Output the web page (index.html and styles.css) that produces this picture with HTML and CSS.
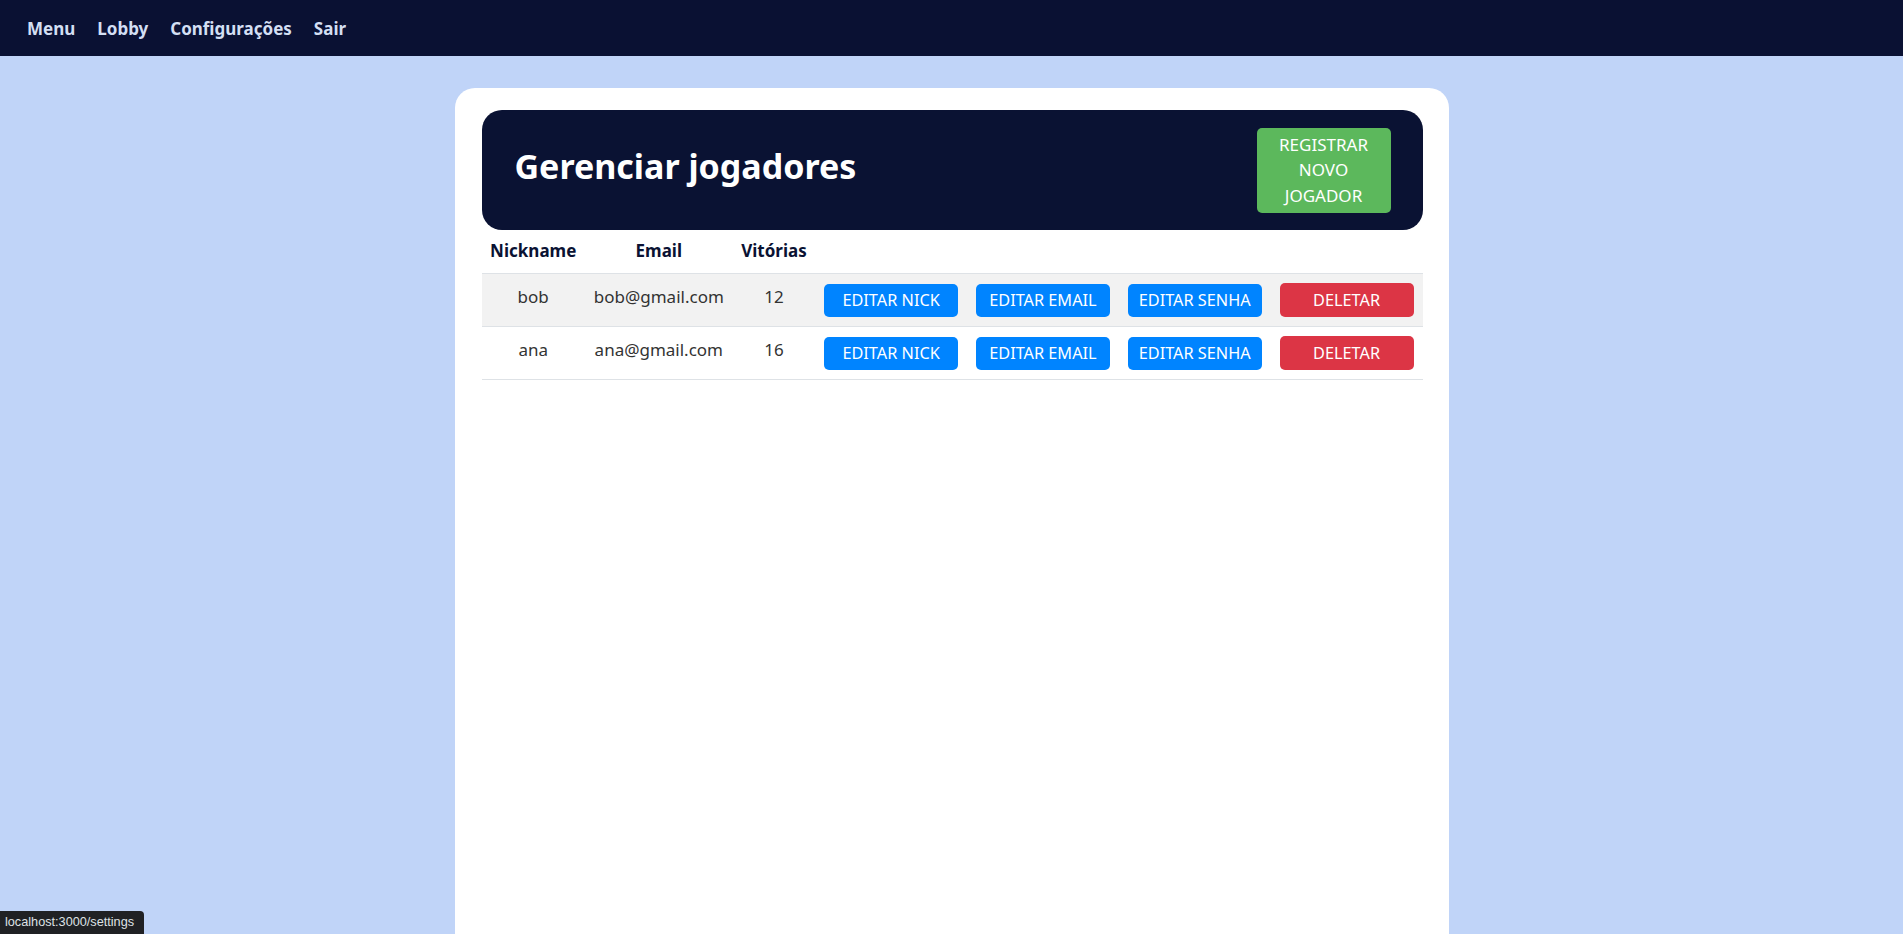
FILE: index.html
```html
<!DOCTYPE html>
<html lang="pt-BR">
<head>
<meta charset="utf-8">
<title>Gerenciar jogadores</title>
<link rel="stylesheet" href="styles.css">
</head>
<body>
<nav class="navbar">
  <a class="nav-link" href="#">Menu</a>
  <a class="nav-link" href="#">Lobby</a>
  <a class="nav-link" href="#">Configurações</a>
  <a class="nav-link" href="#">Sair</a>
</nav>
<main class="card">
  <header class="card-header">
    <h1 class="title">Gerenciar jogadores</h1>
    <button class="btn btn-green">REGISTRAR NOVO JOGADOR</button>
  </header>
  <table class="players">
    <thead>
      <tr>
        <th>Nickname</th>
        <th>Email</th>
        <th>Vitórias</th>
        <th></th><th></th><th></th><th></th>
      </tr>
    </thead>
    <tbody>
      <tr class="striped">
        <td class="txt">bob</td>
        <td class="txt">bob@gmail.com</td>
        <td class="txt">12</td>
        <td><button class="btn btn-blue">EDITAR NICK</button></td>
        <td><button class="btn btn-blue">EDITAR EMAIL</button></td>
        <td><button class="btn btn-blue">EDITAR SENHA</button></td>
        <td><button class="btn btn-red">DELETAR</button></td>
      </tr>
      <tr>
        <td class="txt">ana</td>
        <td class="txt">ana@gmail.com</td>
        <td class="txt">16</td>
        <td><button class="btn btn-blue">EDITAR NICK</button></td>
        <td><button class="btn btn-blue">EDITAR EMAIL</button></td>
        <td><button class="btn btn-blue">EDITAR SENHA</button></td>
        <td><button class="btn btn-red">DELETAR</button></td>
      </tr>
    </tbody>
  </table>
</main>
<div class="status-bar">localhost:3000/settings</div>
</body>
</html>
```
FILE: styles.css
```css
* { box-sizing: border-box; }

html, body {
  margin: 0;
  padding: 0;
}

body {
  background: #c0d4f8;
  font-family: "Noto Sans", "Open Sans", sans-serif;
  color: #333333;
  font-size: 17px;
}

.navbar {
  height: 56px;
  background: #0a1133;
  display: flex;
  align-items: center;
  gap: 22px;
  padding-left: 27px;
}

.nav-link {
  color: #d3dff3;
  text-decoration: none;
  font-weight: 700;
  font-size: 17px;
}

.card {
  width: 994px;
  margin: 32px auto 0;
  background: #ffffff;
  border-radius: 20px 20px 0 0;
  padding: 22px 26px 0 27px;
  min-height: 900px;
}

.card-header {
  height: 120px;
  background: #0a1233;
  border-radius: 20px;
  display: flex;
  align-items: center;
  justify-content: space-between;
  padding: 0 32px 0 33px;
}

.title {
  margin: 0 0 8px;
  color: #ffffff;
  font-size: 34px;
  font-weight: 700;
}

.btn {
  border: none;
  color: #ffffff;
  font-family: "Noto Sans", "Open Sans", sans-serif;
  font-size: 16.3px;
  border-radius: 5px;
  width: 134px;
  cursor: pointer;
}

.btn-green {
  background: #5cb85c;
  font-size: 17px;
  line-height: 25.6px;
  padding: 4px 12px;
  height: 85px;
}

.btn-blue {
  background: #0084ff;
  height: 33px;
  padding: 0 4px;
}

.btn-red {
  background: #dc3545;
  height: 34px;
  padding: 0 4px;
}

.players {
  width: 100%;
  border-collapse: collapse;
}

.players th {
  color: #0a1233;
  font-weight: 700;
  padding: 9px 8px 10px;
  text-align: center;
  line-height: 24px;
  border-bottom: 1px solid #dee2e6;
}

.players td {
  padding: 9px 8px 9px;
  text-align: center;
  vertical-align: middle;
  line-height: 24px;
  border-bottom: 1px solid #dee2e6;
}

.players td.txt {
  padding-bottom: 15px;
}

.striped {
  background: #f2f2f2;
}

.status-bar {
  position: fixed;
  left: 0;
  bottom: 0;
  background: #202124;
  color: #dfe1e5;
  font-family: "Liberation Sans", Arial, sans-serif;
  font-size: 12.7px;
  line-height: 23px;
  padding: 0 10px 0 5px;
  border-top-right-radius: 4px;
}
```
